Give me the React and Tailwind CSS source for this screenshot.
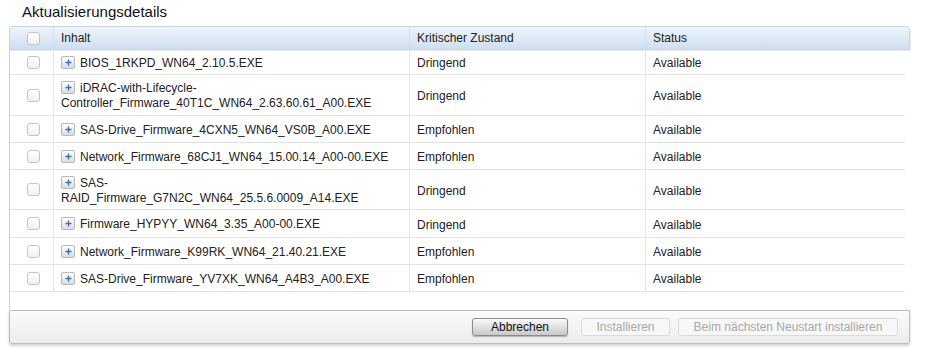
import React from "react";

const rows = [
  { name: ["BIOS_1RKPD_WN64_2.10.5.EXE"], crit: "Dringend", h: "h-[25px]" },
  { name: ["iDRAC-with-Lifecycle-", "Controller_Firmware_40T1C_WN64_2.63.60.61_A00.EXE"], crit: "Dringend", h: "h-[41px]" },
  { name: ["SAS-Drive_Firmware_4CXN5_WN64_VS0B_A00.EXE"], crit: "Empfohlen", h: "h-[27px]" },
  { name: ["Network_Firmware_68CJ1_WN64_15.00.14_A00-00.EXE"], crit: "Empfohlen", h: "h-[27px]" },
  { name: ["SAS-", "RAID_Firmware_G7N2C_WN64_25.5.6.0009_A14.EXE"], crit: "Dringend", h: "h-[40px]" },
  { name: ["Firmware_HYPYY_WN64_3.35_A00-00.EXE"], crit: "Dringend", h: "h-[28px]" },
  { name: ["Network_Firmware_K99RK_WN64_21.40.21.EXE"], crit: "Empfohlen", h: "h-[27px]" },
  { name: ["SAS-Drive_Firmware_YV7XK_WN64_A4B3_A00.EXE"], crit: "Empfohlen", h: "h-[27px]" },
];

function Checkbox() {
  return (
    <div className="w-[13px] h-[13px] ml-[3px] rounded-[3px] border border-[#c4c4c4] bg-gradient-to-b from-white to-[#f1f1f1]" />
  );
}

function Plus() {
  return (
    <span className="inline-flex align-top w-[14px] h-[13px] mr-[5px] items-center justify-center border border-[#b8b8b8] rounded-[2px] bg-gradient-to-b from-white to-[#dcdcdc]">
      <svg width="7" height="7" viewBox="0 0 7 7">
        <path d="M3.5 0.5v6M0.5 3.5h6" stroke="#3a6fb8" strokeWidth="1.4" />
      </svg>
    </span>
  );
}

export default function App() {
  return (
    <div className="w-[952px] h-[357px] bg-white text-[12px] text-[#222] font-['Liberation_Sans',Arial,sans-serif] relative">
      <div className="pl-[22px] pt-[3px] h-[26px] text-[15px] leading-[18px] text-[#111]">Aktualisierungsdetails</div>
      <div className="ml-[9px] w-[901px]">
        <div className="flex h-[24px] rounded-t-[4px] border border-[#c9d3df] bg-gradient-to-b from-[#eef4fb] to-[#cfdff0] shadow-[1px_1px_1px_rgba(0,0,0,0.08)]">
          <div className="w-[44px] flex items-center justify-center border-r border-[#d6dee8]">
            <Checkbox />
          </div>
          <div className="w-[356px] flex items-center pl-[7px] border-r border-[#d6dee8]">Inhalt</div>
          <div className="w-[236px] flex items-center pl-[7px] border-r border-[#d6dee8]">Kritischer Zustand</div>
          <div className="flex-1 flex items-center pl-[7px]">Status</div>
        </div>
        <div className="border-l border-[#cfcfcf] w-[896px]">
          {rows.map((r, i) => (
            <div key={i} className={`flex ${r.h} border-b border-[#e3e3e3]`}>
              <div className="w-[44px] flex items-center justify-center border-r border-[#e6e6e6]">
                <Checkbox />
              </div>
              <div className="w-[356px] flex items-center pl-[7px] pt-[2px] border-r border-[#e6e6e6] leading-[15px]">
                <div>
                  <Plus />
                  {r.name[0]}
                  {r.name[1] && (
                    <>
                      <br />
                      {r.name[1]}
                    </>
                  )}
                </div>
              </div>
              <div className="w-[236px] flex items-center pl-[7px] pt-[2px] border-r border-[#e6e6e6]">{r.crit}</div>
              <div className="flex-1 flex items-center pl-[7px] pt-[2px]">Available</div>
            </div>
          ))}
          <div className="h-[17px]" />
        </div>
        <div className="h-[34px] mt-[1px] flex items-center justify-end gap-[8px] pr-[11px] border border-[#bdbdbd] rounded-b-[3px] bg-gradient-to-b from-[#fbfbfb] to-[#ececec] shadow-[0_2px_3px_rgba(0,0,0,0.18)]">
          <button className="h-[18px] w-[96px] mr-[5px] rounded-[3px] border border-[#8a8a8a] bg-gradient-to-b from-[#fafafa] to-[#c9c9c9] text-[#111] text-[12px] leading-none shadow-[0_1px_1px_rgba(0,0,0,0.25)]">Abbrechen</button>
          <button className="h-[18px] w-[89px] rounded-[3px] border border-[#dadada] bg-[#f7f7f7] text-[#a8a8a8] text-[12px] leading-none">Installieren</button>
          <button className="h-[18px] w-[220px] rounded-[3px] border border-[#dadada] bg-[#f7f7f7] text-[#a8a8a8] text-[12px] leading-none">Beim nächsten Neustart installieren</button>
        </div>
      </div>
    </div>
  );
}
